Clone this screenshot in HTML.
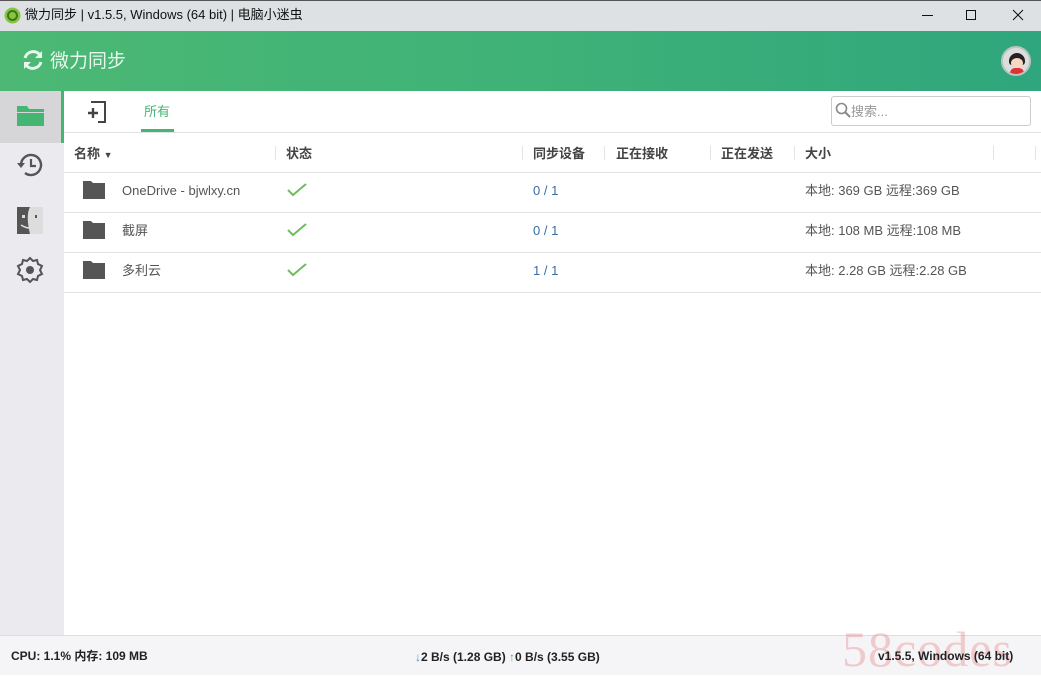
<!DOCTYPE html>
<html><head><meta charset="utf-8"><style>
*{margin:0;padding:0;box-sizing:border-box}
body{width:1041px;height:675px;overflow:hidden;font-family:"Liberation Sans","Noto Sans CJK SC",sans-serif;background:#fff;position:relative;font-size:13px;color:#333;line-height:16px}
.abs{position:absolute}
#title{left:0;top:0;width:1041px;height:31px;background:#dde1e4;border-top:1px solid #555}
#hdr{left:0;top:31px;width:1041px;height:60px;background:linear-gradient(90deg,#4cb874,#3fb277 50%,#2fa67d)}
#side{left:0;top:91px;width:64px;height:544px;background:#ebebef}
#sel{left:0;top:91px;width:61px;height:52px;background:#d6d6d8}
#selb{left:61px;top:91px;width:3px;height:52px;background:#45b573}
.line{position:absolute;height:1px;background:#e2e2e2;left:64px;width:977px}
.hd{position:absolute;top:146px;font-size:13px;font-weight:bold;color:#444}
.sep{position:absolute;top:146px;width:1px;height:14px;background:#e4e4e4}
.rt{position:absolute;font-size:13px;color:#555}
.blue{color:#3a6ea5}
#foot{left:0;top:635px;width:1041px;height:40px;background:#f5f5f7;border-top:1px solid #ddd;font-size:12px;font-weight:bold;color:#222}
</style></head><body>
<div id="title" class="abs">
 <svg class="abs" style="left:4px;top:6px" width="17" height="17"><circle cx="8.5" cy="8.5" r="8" fill="#8fc23c"/><circle cx="8.5" cy="8.5" r="4.5" fill="none" stroke="#2f7d22" stroke-width="2"/></svg>
 <div class="abs" style="left:25px;top:6px;font-size:13px;color:#111">微力同步 | v1.5.5, Windows (64 bit) | 电脑小迷虫</div>
 <div class="abs" style="left:922px;top:14px;width:11px;height:1px;background:#111"></div>
 <div class="abs" style="left:966px;top:9px;width:10px;height:10px;border:1px solid #111"></div>
 <svg class="abs" style="left:1012px;top:8px" width="12" height="12"><path d="M1 1L11 11M11 1L1 11" stroke="#111" stroke-width="1"/></svg>
</div>
<div id="hdr" class="abs">
 <svg class="abs" style="left:21px;top:17px" width="24" height="24" viewBox="0 0 24 24"><path d="M4 10A8.5 8.5 0 0 1 19 7" fill="none" stroke="#e8f7ee" stroke-width="3"/><path d="M20 14A8.5 8.5 0 0 1 5 17" fill="none" stroke="#e8f7ee" stroke-width="3"/><path d="M21 3v7h-7z" fill="#e8f7ee"/><path d="M3 21v-7h7z" fill="#e8f7ee"/></svg>
 <div class="abs" style="left:50px;top:19px;font-size:19px;line-height:24px;color:#e8f7ee">微力同步</div>
 <div class="abs" style="left:1001px;top:15px;width:30px;height:30px;border-radius:50%;background:#ddd;border:2px solid #b9c6c0;overflow:hidden">
  <div class="abs" style="left:6px;top:5px;width:16px;height:12px;border-radius:8px 8px 3px 3px;background:#222"></div>
  <div class="abs" style="left:8px;top:10px;width:12px;height:10px;border-radius:50%;background:#f7d6c4"></div>
  <div class="abs" style="left:7px;top:20px;width:14px;height:8px;border-radius:5px 5px 0 0;background:#d33"></div>
 </div>
</div>
<div id="side" class="abs"></div><div id="sel" class="abs"></div><div id="selb" class="abs"></div>
<svg class="abs" style="left:17px;top:104px" width="27" height="22"><path d="M0 2h10l2 3h15v3H0z" fill="#45b573"/><rect y="9" width="27" height="13" fill="#45b573"/></svg>
<svg class="abs" style="left:16px;top:151px" width="28" height="28" viewBox="0 0 28 28"><path d="M5 14A10 10 0 1 1 9 22" fill="none" stroke="#555" stroke-width="2.4"/><path d="M1 12l4 5 4-5z" fill="#555"/><path d="M15 8v7h5" fill="none" stroke="#555" stroke-width="2.2"/></svg>
<svg class="abs" style="left:17px;top:207px" width="26" height="27"><rect width="26" height="27" fill="#555"/><path d="M13 0c-3 6-3 14 0 27h13V0z" fill="#ddd"/><rect x="5" y="8" width="3" height="3" fill="#ddd"/><rect x="18" y="8" width="2" height="3" fill="#555"/><path d="M4 18q9 6 18 0" fill="none" stroke="#ddd" stroke-width="1.5"/></svg>
<svg class="abs" style="left:16px;top:256px" width="28" height="28" viewBox="0 0 28 28"><path d="M14 2l3 3 4-1 1 4 4 2-2 4 2 4-4 2-1 4-4-1-3 3-3-3-4 1-1-4-4-2 2-4-2-4 4-2 1-4 4 1z" fill="none" stroke="#555" stroke-width="2"/><circle cx="14" cy="14" r="4" fill="#555"/></svg>
<svg class="abs" style="left:85px;top:101px" width="22" height="22"><path d="M6 1h14v20H13" fill="none" stroke="#444" stroke-width="2"/><path d="M3 12h10M8 7v10" stroke="#444" stroke-width="2.4"/></svg>
<div class="abs" style="left:144px;top:104px;font-size:13px;color:#45b573">所有</div>
<div class="abs" style="left:141px;top:129px;width:33px;height:3px;background:#45b573"></div>
<div class="abs" style="left:831px;top:96px;width:200px;height:30px;border:1px solid #ccc;border-radius:3px"></div>
<svg class="abs" style="left:835px;top:102px" width="16" height="16"><circle cx="6.5" cy="6.5" r="5" fill="none" stroke="#888" stroke-width="1.6"/><path d="M10 10l5 5" stroke="#888" stroke-width="2"/></svg>
<div class="abs" style="left:851px;top:104px;font-size:13px;color:#999">搜索...</div>
<div class="line" style="top:132px"></div>
<div class="hd" style="left:74px">名称 <span style="font-size:9px">▼</span></div>
<div class="sep" style="left:275px"></div><div class="hd" style="left:286px">状态</div>
<div class="sep" style="left:522px"></div><div class="hd" style="left:533px">同步设备</div>
<div class="sep" style="left:604px"></div><div class="hd" style="left:616px">正在接收</div>
<div class="sep" style="left:710px"></div><div class="hd" style="left:721px">正在发送</div>
<div class="sep" style="left:794px"></div><div class="hd" style="left:805px">大小</div>
<div class="sep" style="left:993px"></div><div class="sep" style="left:1035px"></div>
<div class="line" style="top:172px"></div><div class="line" style="top:212px"></div><div class="line" style="top:252px"></div><div class="line" style="top:292px"></div>
<svg class="abs" style="left:83px;top:181px" width="22" height="18"><path d="M0 0h8l2 2h12v16H0z" fill="#555"/></svg>
<svg class="abs" style="left:83px;top:221px" width="22" height="18"><path d="M0 0h8l2 2h12v16H0z" fill="#555"/></svg>
<svg class="abs" style="left:83px;top:261px" width="22" height="18"><path d="M0 0h8l2 2h12v16H0z" fill="#555"/></svg>
<div class="rt" style="left:122px;top:183px">OneDrive - bjwlxy.cn</div>
<div class="rt" style="left:122px;top:223px">截屏</div>
<div class="rt" style="left:122px;top:263px">多利云</div>
<svg class="abs" style="left:287px;top:183px" width="20" height="14"><path d="M1 7l5 5L19 1" fill="none" stroke="#6cbf5a" stroke-width="2"/></svg>
<svg class="abs" style="left:287px;top:223px" width="20" height="14"><path d="M1 7l5 5L19 1" fill="none" stroke="#6cbf5a" stroke-width="2"/></svg>
<svg class="abs" style="left:287px;top:263px" width="20" height="14"><path d="M1 7l5 5L19 1" fill="none" stroke="#6cbf5a" stroke-width="2"/></svg>
<div class="rt blue" style="left:533px;top:183px">0 / 1</div>
<div class="rt blue" style="left:533px;top:223px">0 / 1</div>
<div class="rt blue" style="left:533px;top:263px">1 / 1</div>
<div class="rt" style="left:805px;top:183px">本地: 369 GB 远程:369 GB</div>
<div class="rt" style="left:805px;top:223px">本地: 108 MB 远程:108 MB</div>
<div class="rt" style="left:805px;top:263px">本地: 2.28 GB 远程:2.28 GB</div>
<div id="foot" class="abs">
 <div class="abs" style="left:11px;top:12px">CPU: 1.1% 内存: 109 MB</div>
 <div class="abs" style="left:415px;top:13px"><span style="color:#2a9fd6">↓</span>2 B/s (1.28 GB) <span style="color:#4cb848">↑</span>0 B/s (3.55 GB)</div>
 <div class="abs" style="left:842px;top:-12px;font-family:'Liberation Serif',serif;font-size:50px;line-height:50px;color:rgba(230,120,120,0.35);font-weight:normal;letter-spacing:1px">58codes</div>
 <div class="abs" style="left:878px;top:12px">v1.5.5, Windows (64 bit)</div>
</div>
</body></html>
